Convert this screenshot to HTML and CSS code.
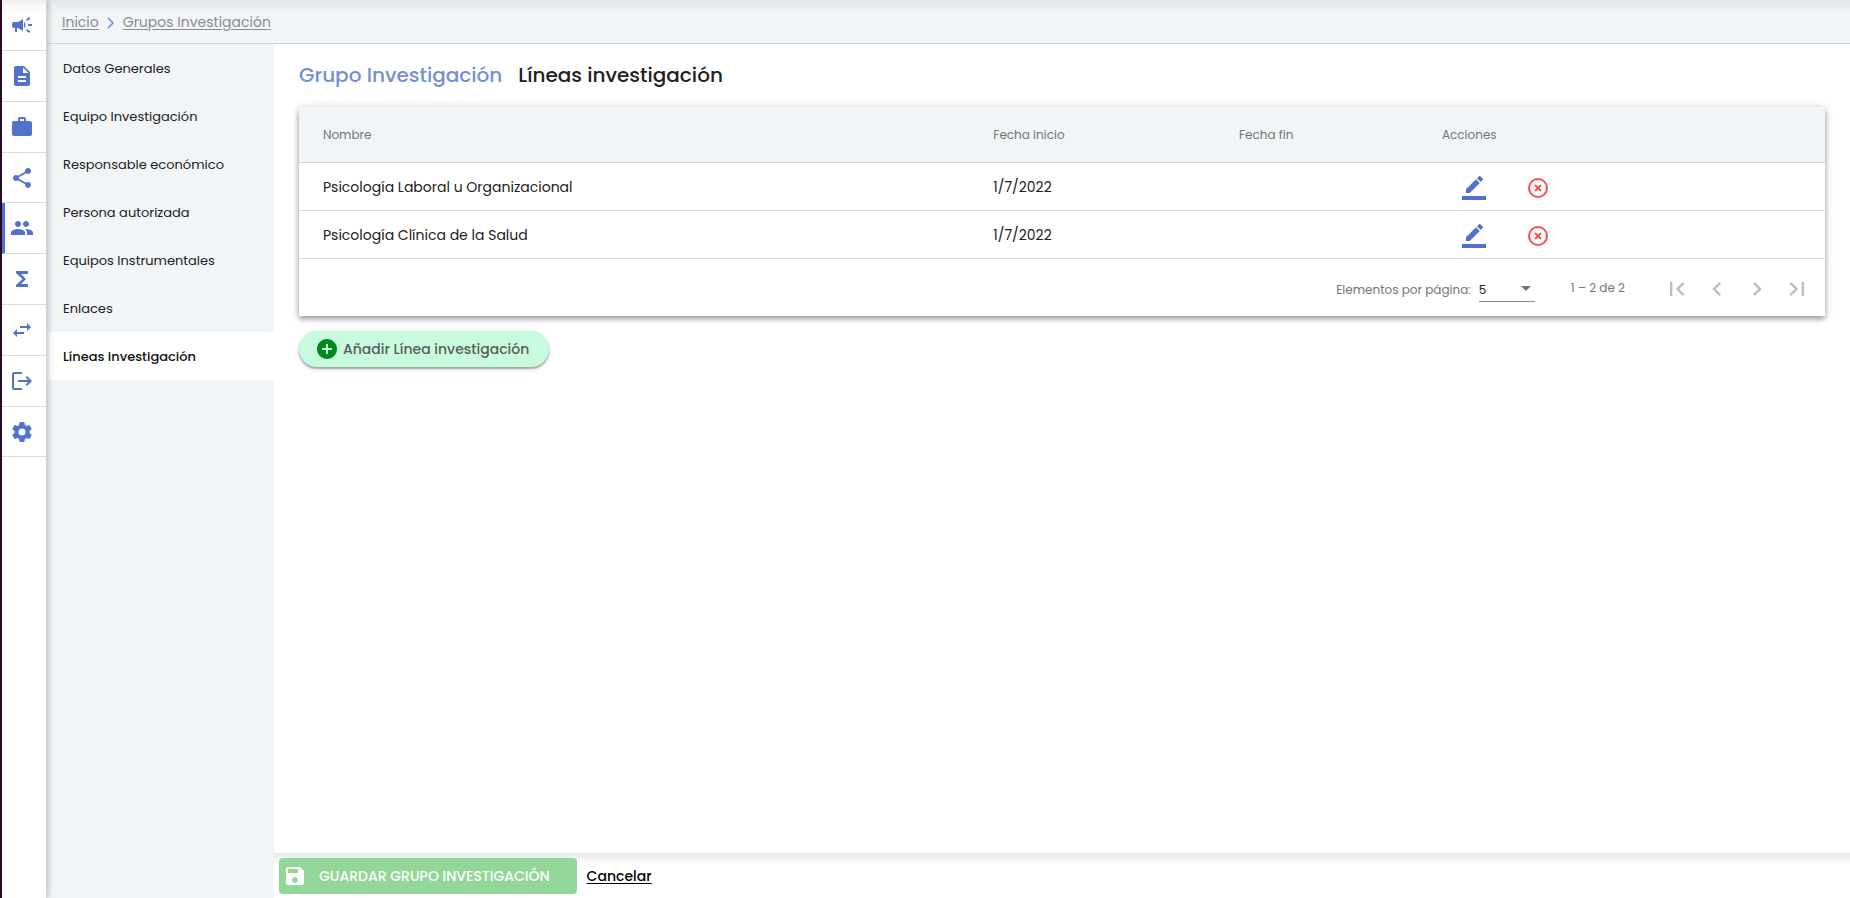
FILE: index.html
```html
<!DOCTYPE html>
<html lang="es">
<head>
<meta charset="utf-8">
<title>Líneas investigación</title>
<link rel="stylesheet" href="styles.css">
</head>
<body>
<div class="app">
  <nav class="rail" aria-label="Módulos">
    <a class="rail-item" href="#" aria-label="Convocatorias"><svg class="icon" viewBox="0 0 24 24"><path d="M18 11v2h4v-2h-4zm-2 6.610c.96.71 2.210 1.650 3.200 2.390.4-.53.8-1.070 1.200-1.600-.99-.74-2.240-1.680-3.200-2.400-.4.540-.8 1.080-1.200 1.610zM20.400 5.600c-.4-.53-.8-1.070-1.200-1.600-.99.740-2.240 1.680-3.200 2.400.4.530.8 1.070 1.200 1.600.96-.72 2.210-1.650 3.200-2.400zM4 9c-1.100 0-2 .9-2 2v2c0 1.100.9 2 2 2h1v4h2v-4h1l5 3V6L8 9H4zm11.500 3c0-1.330-.58-2.530-1.500-3.350v6.690c.92-.81 1.500-2.010 1.500-3.340z"/></svg></a>
    <a class="rail-item" href="#" aria-label="Solicitudes"><svg class="icon" viewBox="0 0 24 24"><path d="M14 2H6c-1.100 0-1.990.9-1.990 2L4 20c0 1.100.89 2 1.990 2H18c1.100 0 2-.9 2-2V8l-6-6zm2 16H8v-2h8v2zm0-4H8v-2h8v2zm-3-5V3.500L18.500 9H13z"/></svg></a>
    <a class="rail-item" href="#" aria-label="Proyectos"><svg class="icon" viewBox="0 0 24 24"><path d="M20 6h-4V4c0-1.110-.89-2-2-2h-4c-1.110 0-2 .89-2 2v2H4c-1.110 0-1.990.89-1.990 2L2 19c0 1.110.89 2 2 2h16c1.110 0 2-.89 2-2V8c0-1.110-.89-2-2-2zm-6 0h-4V4h4v2z"/></svg></a>
    <a class="rail-item" href="#" aria-label="Relaciones"><svg class="icon" viewBox="0 0 24 24"><path d="M18 16.080c-.76 0-1.440.3-1.960.77L8.910 12.700c.05-.23.09-.46.09-.7s-.04-.47-.09-.7l7.050-4.110c.54.500 1.250.81 2.040.81 1.660 0 3-1.340 3-3s-1.340-3-3-3-3 1.340-3 3c0 .24.040.47.090.7L8.040 9.810C7.500 9.310 6.790 9 6 9c-1.660 0-3 1.340-3 3s1.340 3 3 3c.79 0 1.500-.31 2.040-.81l7.120 4.160c-.05.21-.08.43-.08.65 0 1.610 1.310 2.920 2.920 2.920s2.920-1.310 2.920-2.920-1.310-2.920-2.920-2.920z"/></svg></a>
    <a class="rail-item rail-item-active" href="#" aria-label="Grupos"><svg class="icon" viewBox="0 0 24 24"><path d="M16 11c1.660 0 2.990-1.340 2.990-3S17.660 5 16 5s-3 1.340-3 3 1.340 3 3 3zm-8 0c1.660 0 2.990-1.340 2.990-3S9.660 5 8 5 5 6.340 5 8s1.340 3 3 3zm0 2c-2.330 0-7 1.170-7 3.500V19h14v-2.500C15 14.170 10.330 13 8 13zm8 0c-.29 0-.62.020-.97.050 1.160.84 1.970 1.970 1.970 3.450V19h6v-2.500c0-2.330-4.670-3.500-7-3.500z"/></svg></a>
    <a class="rail-item" href="#" aria-label="Baremación"><svg class="icon" viewBox="0 0 24 24"><path d="M18 4H6v2l6.500 6L6 18v2h12v-3h-7l5-5-5-5h7z"/></svg></a>
    <a class="rail-item" href="#" aria-label="Transferencias"><svg class="icon" viewBox="0 0 24 24"><path d="M6.990 11L3 15l3.990 4v-3H14v-2H6.990v-3zM21 9l-3.990-4v3H10v2h7.010v3L21 9z"/></svg></a>
    <a class="rail-item" href="#" aria-label="Salidas"><svg class="icon" viewBox="0 0 24 24"><path d="M12 3H4a2 2 0 0 0-2 2v14a2 2 0 0 0 2 2h8v-2H4V5h8zM17 7l-1.400 1.400 2.600 2.600H8v2h10.200l-2.600 2.600L17 17l5-5z"/></svg></a>
    <a class="rail-item" href="#" aria-label="Configuración"><svg class="icon" viewBox="0 0 24 24"><path d="M12 15.500A3.500 3.500 0 0 1 8.500 12 3.500 3.500 0 0 1 12 8.500a3.500 3.500 0 0 1 3.500 3.500 3.500 3.500 0 0 1-3.500 3.500m7.430-2.530c.04-.32.070-.64.070-.97s-.03-.66-.07-1l2.110-1.630c.19-.15.240-.42.120-.64l-2-3.460c-.12-.22-.39-.31-.61-.22l-2.490 1c-.52-.39-1.060-.73-1.690-.98l-.37-2.650A.506.506 0 0 0 14 2h-4c-.25 0-.46.180-.5.420l-.37 2.650c-.63.250-1.170.59-1.690.98l-2.490-1c-.22-.09-.49 0-.61.220l-2 3.460c-.13.220-.07.49.12.640L4.570 11c-.04.340-.07.67-.07 1s.03.650.07.970l-2.110 1.660c-.19.150-.25.420-.12.640l2 3.460c.12.220.39.300.61.220l2.490-1.010c.52.400 1.060.74 1.690.99l.37 2.650c.04.240.25.420.5.420h4c.25 0 .46-.18.500-.42l.37-2.650c.63-.26 1.170-.59 1.690-.99l2.490 1.010c.22.080.49 0 .61-.22l2-3.460c.12-.22.070-.49-.12-.64l-2.110-1.660z"/></svg></a>
  </nav>
  <div class="page">
    <header class="topbar">
      <nav class="breadcrumb" aria-label="Ruta">
        <a href="#">Inicio</a>
        <svg class="crumb-arrow" viewBox="0 0 8 12"><path d="M1 1l5 5-5 5"/></svg>
        <a href="#">Grupos Investigación</a>
      </nav>
    </header>
    <div class="body">
      <nav class="submenu" aria-label="Secciones">
        <a href="#">Datos Generales</a>
        <a href="#">Equipo Investigación</a>
        <a href="#">Responsable económico</a>
        <a href="#">Persona autorizada</a>
        <a href="#">Equipos Instrumentales</a>
        <a href="#">Enlaces</a>
        <a class="submenu-active" href="#" aria-current="page">Líneas investigación</a>
      </nav>
      <div class="workspace">
        <main class="content">
          <h1 class="title"><span class="title-parent">Grupo Investigación</span><span>Líneas investigación</span></h1>
          <section class="card">
            <table class="lines">
              <thead>
                <tr><th class="col-name">Nombre</th><th class="col-start">Fecha inicio</th><th class="col-end">Fecha fin</th><th>Acciones</th></tr>
              </thead>
              <tbody>
                <tr>
                  <td>Psicología Laboral u Organizacional</td><td>1/7/2022</td><td></td>
                  <td><div class="actions">
                    <button class="icon-button edit" type="button" aria-label="Editar"><svg class="icon" viewBox="0 0 24 24"><path d="M17.750 7L14 3.250l-10 10V17h3.750l10-10zm2.960-2.960c.39-.39.39-1.020 0-1.410L18.370.29c-.39-.39-1.020-.39-1.410 0L15 2.250 18.750 6l1.960-1.960zM0 20h24v4H0z"/></svg></button>
                    <button class="icon-button remove" type="button" aria-label="Eliminar"><svg class="icon" viewBox="0 0 24 24"><circle cx="12" cy="12" r="9"/><path d="M9 9l6 6M15 9l-6 6"/></svg></button>
                  </div></td>
                </tr>
                <tr>
                  <td>Psicología Clínica de la Salud</td><td>1/7/2022</td><td></td>
                  <td><div class="actions">
                    <button class="icon-button edit" type="button" aria-label="Editar"><svg class="icon" viewBox="0 0 24 24"><path d="M17.750 7L14 3.250l-10 10V17h3.750l10-10zm2.960-2.960c.39-.39.39-1.020 0-1.410L18.370.29c-.39-.39-1.020-.39-1.410 0L15 2.250 18.750 6l1.960-1.960zM0 20h24v4H0z"/></svg></button>
                    <button class="icon-button remove" type="button" aria-label="Eliminar"><svg class="icon" viewBox="0 0 24 24"><circle cx="12" cy="12" r="9"/><path d="M9 9l6 6M15 9l-6 6"/></svg></button>
                  </div></td>
                </tr>
              </tbody>
            </table>
            <div class="paginator">
              <div class="page-size">
                <label for="page-size">Elementos por página:</label>
                <span class="select"><select id="page-size"><option>5</option><option>10</option><option>25</option></select></span>
              </div>
              <span class="range">1 – 2 de 2</span>
              <div class="pager">
                <button type="button" disabled aria-label="Primera página"><svg viewBox="0 0 24 24"><path d="M18.410 16.590L13.820 12l4.590-4.590L17 6l-6 6 6 6zM6 6h2v12H6z"/></svg></button>
                <button type="button" disabled aria-label="Página anterior"><svg viewBox="0 0 24 24"><path d="M15.410 7.410L14 6l-6 6 6 6 1.410-1.410L10.830 12z"/></svg></button>
                <button type="button" disabled aria-label="Página siguiente"><svg viewBox="0 0 24 24"><path d="M10 6L8.590 7.410 13.170 12l-4.580 4.590L10 18l6-6z"/></svg></button>
                <button type="button" disabled aria-label="Última página"><svg viewBox="0 0 24 24"><path d="M5.590 7.410L10.180 12l-4.590 4.590L7 18l6-6-6-6zM16 6h2v12h-2z"/></svg></button>
              </div>
            </div>
          </section>
          <button class="add" type="button"><svg class="icon" viewBox="0 0 24 24"><path d="M12 2C6.480 2 2 6.480 2 12s4.480 10 10 10 10-4.480 10-10S17.520 2 12 2zm5 11h-4v4h-2v-4H7v-2h4V7h2v4h4v2z"/></svg>Añadir Línea investigación</button>
        </main>
        <footer class="footer">
          <button class="save" type="button" disabled><svg class="icon" viewBox="0 0 24 24"><path d="M17 3H5c-1.110 0-2 .9-2 2v14c0 1.100.89 2 2 2h14c1.100 0 2-.9 2-2V7l-4-4zm-5 16c-1.660 0-3-1.340-3-3s1.340-3 3-3 3 1.340 3 3-1.340 3-3 3zm3-10H5V5h10v4z"/></svg>GUARDAR GRUPO INVESTIGACIÓN</button>
          <a class="cancel" href="#">Cancelar</a>
        </footer>
      </div>
    </div>
  </div>
</div>
</body>
</html>
```
FILE: styles.css
```css
* { box-sizing: border-box; }

body {
  margin: 0;
  font-family: Poppins, Inter, sans-serif;
  font-size: 14px;
  color: #212121;
  background: #fff;
}

a { color: inherit; text-decoration: none; }
button, select { font: inherit; color: inherit; }
button { border: 0; padding: 0; background: none; }

.app {
  display: flex;
  min-height: 100vh;
  border-left: 2px solid #2c0a26;
}

.icon { display: block; width: 24px; height: 24px; flex: none; fill: currentColor; }

/* Module rail */
.rail {
  position: relative;
  z-index: 1;
  display: grid;
  grid-template-rows: repeat(3, 51px) 50px repeat(4, 51px) 50px;
  align-content: start;
  flex: none;
  width: 45px;
  background: linear-gradient(#f0f0f0, #fff 14px);
  border-right: 1px solid #d4d4d4;
  box-shadow: 1px 0 6px rgba(0, 0, 0, .25);
  color: #5272cc;
}

.rail-item {
  display: flex;
  align-items: center;
  padding-left: 8px;
  border-bottom: 1px solid #dcdcdc;
}

.rail-item-active { padding-left: 5px; border-left: 3px solid #5272cc; }

/* Header */
.page { display: flex; flex: 1; flex-direction: column; min-width: 0; }

.topbar {
  padding: 0 15px;
  border-bottom: 1px solid #d3d6d9;
  background: linear-gradient(#e5e6e8, #f1f5f8 14px);
}

.breadcrumb {
  display: flex;
  align-items: center;
  gap: 8px;
  height: 43px;
  padding-top: 2px;
  color: #8c8c8c;
}

.breadcrumb a { text-decoration: underline; text-underline-offset: 2px; }
.crumb-arrow { width: 8px; height: 12px; fill: none; stroke: #6f8ad6; stroke-width: 1.500; }

.body { display: flex; flex: 1; }

.submenu {
  flex: none;
  width: 227px;
  background: #f1f5f8;
  font-size: 13px;
}

.submenu a { display: flex; align-items: center; height: 48px; padding: 2px 16px 0; }
.submenu .submenu-active { background: #fff; font-weight: 500; color: #111; }

/* Content */
.workspace { display: flex; flex: 1; flex-direction: column; min-width: 0; }
.content { flex: 1; padding: 16px 25px; }

.title {
  display: flex;
  gap: 16px;
  margin: 0 0 17px;
  font-size: 20px;
  font-weight: 500;
  line-height: 30px;
}

.title-parent { color: #738ed8; }

.card {
  border-radius: 4px 4px 0 0;
  background: #fff;
  box-shadow: 0 3px 5px rgba(0, 0, 0, .3), 0 1px 10px rgba(0, 0, 0, .2);
}

.lines { width: 100%; border-collapse: separate; border-spacing: 0; table-layout: fixed; }

.lines th {
  height: 56px;
  padding: 0;
  border-bottom: 1px solid #d3d6d9;
  background: #f1f5f8;
  color: #757575;
  font-size: 12px;
  font-weight: 400;
  text-align: left;
}

.lines th:first-child { border-top-left-radius: 4px; }
.lines th:last-child { border-top-right-radius: 4px; }
.lines td { height: 48px; padding: 2px 0 0; border-bottom: 1px solid #dcdcdc; }
.lines th:first-child, .lines td:first-child { padding-left: 24px; }
.col-name { width: 45.500%; }
.col-start { width: 16.100%; }
.col-end { width: 13.300%; }

.actions { display: flex; align-items: center; gap: 24px; padding-left: 12px; }
.icon-button { display: grid; place-items: center; width: 40px; height: 40px; }
.edit { color: #5272cc; }
.remove { color: #ee5253; }
.remove .icon { fill: none; stroke: currentColor; stroke-width: 2; }

/* Paginator */
.paginator {
  display: flex;
  align-items: center;
  justify-content: flex-end;
  min-height: 57px;
  padding: 0 8px;
  color: #757575;
  font-size: 12px;
}

.page-size { display: flex; align-items: center; gap: 8px; padding-top: 4px; }
.select { position: relative; width: 56px; border-bottom: 1px solid #8c8c8c; }

.select select {
  display: block;
  width: 100%;
  height: 24px;
  padding: 0;
  border: 0;
  background: none;
  color: #212121;
  appearance: none;
}

.select::after {
  content: "";
  position: absolute;
  top: 9px;
  right: 4px;
  border: 5px solid transparent;
  border-top-color: #757575;
  border-bottom: 0;
  pointer-events: none;
}

.range { margin: 0 32px 0 36px; }
.pager { display: flex; padding-top: 2px; }
.pager button { display: grid; place-items: center; width: 40px; height: 40px; color: #bdbdbd; }
.pager svg { width: 28px; height: 28px; fill: currentColor; }

.add {
  display: flex;
  align-items: center;
  gap: 4px;
  height: 36px;
  margin-top: 15px;
  padding: 0 20px 0 16px;
  border-radius: 18px;
  background: #c8fae0;
  box-shadow: 0 2px 2px rgba(0, 0, 0, .3), 0 1px 5px rgba(0, 0, 0, .15);
  color: #5c5c5c;
  font-weight: 500;
}

.add .icon { fill: #008a1c; }

/* Footer */
.footer {
  display: flex;
  align-items: center;
  gap: 10px;
  padding: 5px 5px 4px;
  background: linear-gradient(#e8e8e8, #fff 12px);
}

.save {
  display: flex;
  align-items: center;
  gap: 12px;
  height: 36px;
  padding: 0 27px 0 4px;
  border-radius: 4px;
  background: #92d698;
  color: #fff;
  font-weight: 500;
}

.cancel { color: #000; font-weight: 500; text-decoration: underline; text-underline-offset: 2px; }
```
